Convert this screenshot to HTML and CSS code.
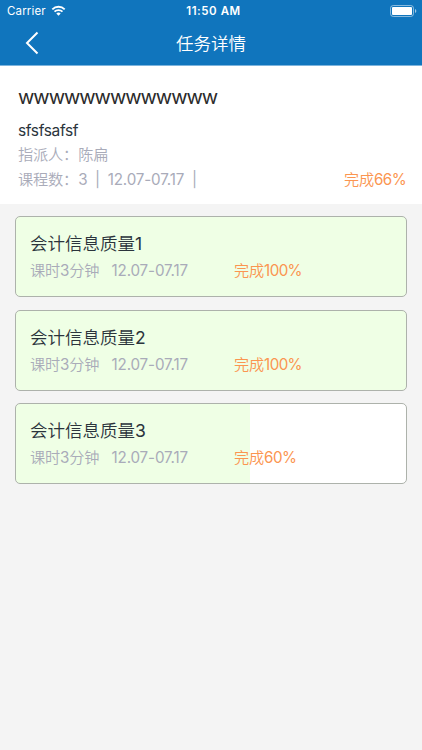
FILE: index.html
```html
<!DOCTYPE html>
<html lang="zh-CN">
  <head>
    <meta charset="UTF-8" />
    <meta name="viewport" content="width=device-width, initial-scale=1.0" />
    <title>任务详情</title>
    <link rel="stylesheet" href="styles.css">
  </head>
  <body>
    <header class="header">
      <div class="status-bar">
        <div class="carrier">
          <span>Carrier</span>
          <svg class="wifi" viewBox="0 0 14 11" width="15" height="11">
            <path d="M.8 4.3a8.8 8.8 0 0 1 12.4 0M3 6.7a5.7 5.7 0 0 1 8 0" fill="none" stroke="#fff" stroke-width="1.8" />
            <path d="M7 10.8L4.8 8.6a3.2 3.2 0 0 1 4.4 0z" fill="#fff" />
          </svg>
        </div>
        <div class="time">11:50 AM</div>
        <svg class="battery" viewBox="0 0 27 12" width="27" height="12">
          <rect x="0.5" y="0.5" width="23" height="11" rx="2.8" fill="none" stroke="#fff" stroke-opacity="0.5" />
          <rect x="2" y="2" width="20" height="8" rx="1" fill="#fff" />
          <path d="M25 4c1.8.6 1.8 3.4 0 4z" fill="#fff" fill-opacity="0.6" />
        </svg>
      </div>
      <div class="nav-bar">
        <svg class="back" viewBox="0 0 14 24" width="14" height="24">
          <path d="M12.5 1.5L2 12l10.5 10.5" fill="none" stroke="#fff" stroke-width="2" />
        </svg>
        <h1 class="nav-title">任务详情</h1>
      </div>
    </header>

    <section class="summary">
      <h2 class="task-name">wwwwwwwwwwwww</h2>
      <p class="task-desc">sfsfsafsf</p>
      <p class="task-meta">指派人：陈扁</p>
      <div class="task-meta meta-row">
        <span class="meta-text">课程数：<span class="numbers">3 | 12.07-07.17 |</span></span>
        <span class="done">完成<span class="numbers">66%</span></span>
      </div>
    </section>

    <main class="course-list">
      <div class="course">
        <h3 class="course-name">会计信息质量<span class="numbers">1</span></h3>
        <div class="course-meta">
          <span class="duration">课时<span class="numbers">3</span>分钟</span>
          <span class="numbers">12.07-07.17</span>
          <span class="done">完成<span class="numbers">100%</span></span>
        </div>
      </div>
      <div class="course">
        <h3 class="course-name">会计信息质量<span class="numbers">2</span></h3>
        <div class="course-meta">
          <span class="duration">课时<span class="numbers">3</span>分钟</span>
          <span class="numbers">12.07-07.17</span>
          <span class="done">完成<span class="numbers">100%</span></span>
        </div>
      </div>
      <div class="course" style="--progress: 60%">
        <h3 class="course-name">会计信息质量<span class="numbers">3</span></h3>
        <div class="course-meta">
          <span class="duration">课时<span class="numbers">3</span>分钟</span>
          <span class="numbers">12.07-07.17</span>
          <span class="done">完成<span class="numbers">60%</span></span>
        </div>
      </div>
    </main>
  </body>
</html>
```

FILE: styles.css
```css
* {
  box-sizing: border-box;
}
body {
  margin: 0;
  min-height: 750px;
  background-color: #f4f4f4;
  font-family: Inter, "Noto Sans CJK SC", sans-serif;
  color: #2b343c;
}
h1,
h2,
h3,
p {
  margin: 0;
  font-weight: 350;
}
.header {
  height: 66px;
  background-color: #1075bd;
  border-bottom: 1px solid #7db4dd;
  color: #fff;
}
.status-bar {
  display: grid;
  grid-template-columns: 1fr auto 1fr;
  align-items: center;
  height: 22px;
  padding: 0 5px 0 7px;
  font-size: 11.5px;
}
.carrier {
  display: flex;
  align-items: center;
  gap: 5px;
  letter-spacing: 0.15px;
}
.wifi {
  margin-bottom: 1px;
}
.time {
  margin-left: 3px;
  font-weight: 600;
  letter-spacing: 0.55px;
}
.battery {
  justify-self: end;
  margin-bottom: 1px;
}
.nav-bar {
  display: grid;
  grid-template-columns: 39px 1fr 39px;
  align-items: center;
  height: 42px;
}
.back {
  justify-self: end;
  margin-bottom: 1px;
}
.nav-title {
  padding-top: 2px;
  font-size: 17.5px;
  line-height: 26px;
  text-align: center;
}
.summary {
  height: 138px;
  padding: 17px 16px 0 18px;
  background-color: #fff;
}
.task-name {
  font-size: 20px;
  font-weight: 400;
  line-height: 28px;
  letter-spacing: -1.05px;
  color: #2b2b2b;
}
.task-desc {
  margin-top: 8px;
  font-size: 15.5px;
  font-weight: 400;
  line-height: 24px;
  letter-spacing: -0.35px;
}
.task-meta,
.course-meta {
  font-size: 15.2px;
  font-weight: 350;
  line-height: 25px;
  letter-spacing: -0.15px;
  color: #a9abb9;
}
.task-meta {
  line-height: 24.5px;
}
.numbers {
  font-weight: 400;
}
.meta-row {
  display: flex;
  justify-content: space-between;
}
.meta-text {
  word-spacing: 3.6px;
}
.done {
  color: #fb9550;
}
.done .numbers {
  letter-spacing: -0.6px;
}
.course-list {
  display: grid;
  gap: 12.4px;
  padding: 12.2px 15px;
}
.course {
  --progress: 100%;
  height: 81px;
  padding: 13px 14px;
  border: 1px solid #adb2ab;
  border-radius: 5px;
  background: linear-gradient(to right, #efffe5 var(--progress), #fff var(--progress));
}
.course-name {
  font-size: 17.5px;
  line-height: 28px;
}
.course-meta {
  display: grid;
  grid-template-columns: 81.5px 122.5px 1fr;
}
```
